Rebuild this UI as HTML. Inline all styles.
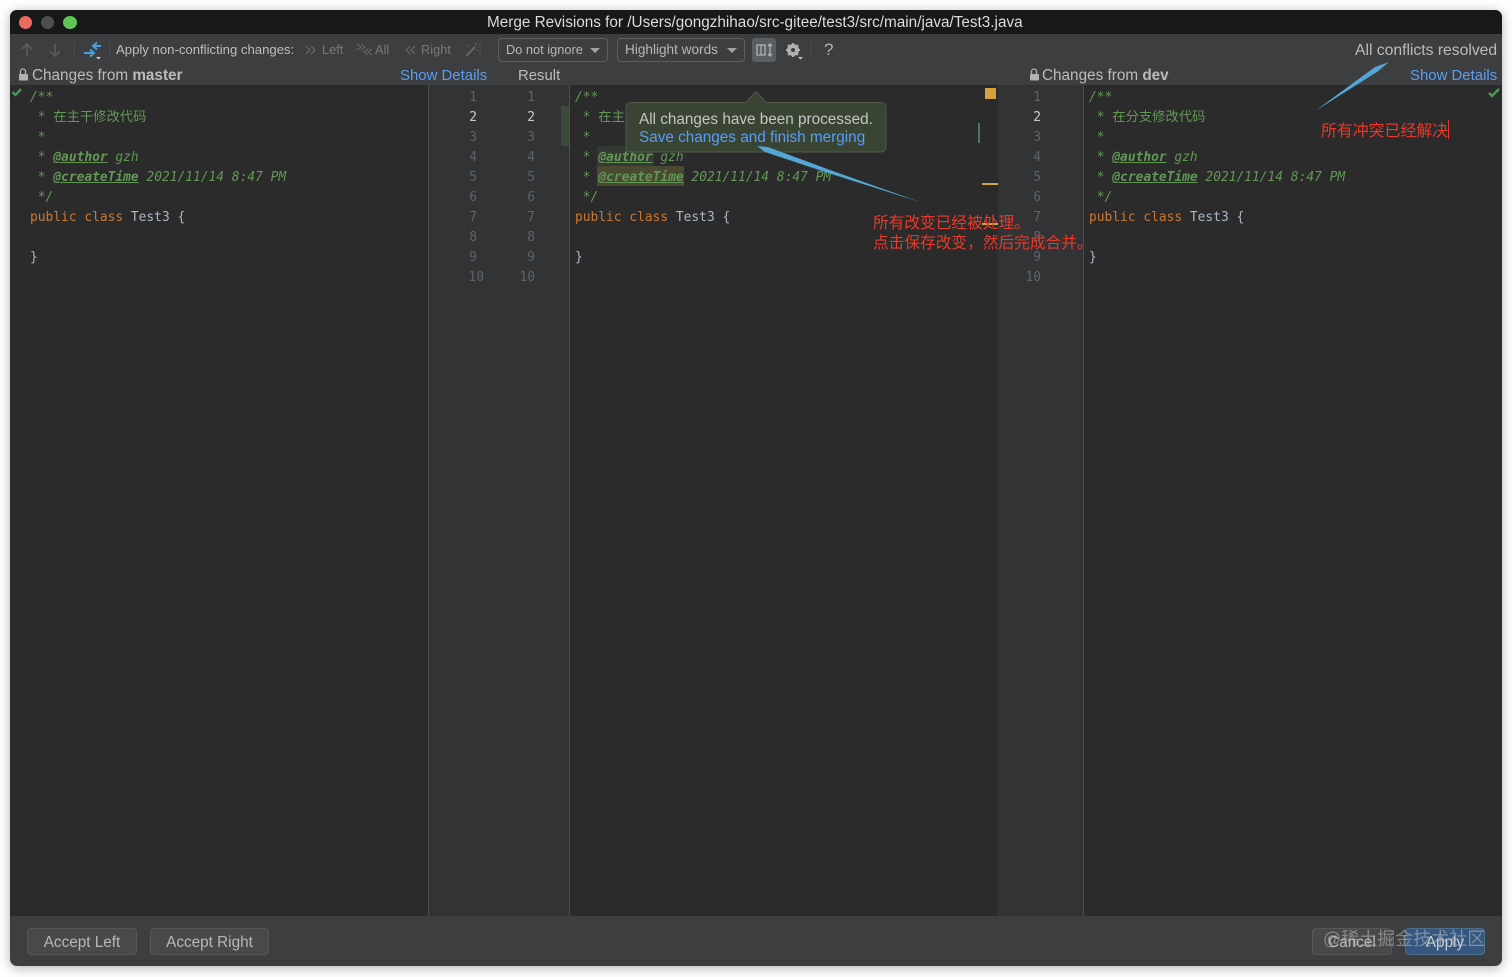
<!DOCTYPE html>
<html><head><meta charset="utf-8">
<style>
html,body{margin:0;padding:0;background:#fff;width:1512px;height:977px;overflow:hidden}
*{box-sizing:border-box}
#w{position:absolute;left:10px;top:10px;width:1492px;height:956px;border-radius:7px;overflow:hidden;background:#3d3e40;box-shadow:0 2px 12px rgba(0,0,0,.3)}
.a{position:absolute;white-space:pre;line-height:20px}
.s{font-family:"Liberation Sans","Noto Sans CJK SC",sans-serif;font-size:13.5px;color:#bbbbbb}
.t{font-size:13.15px;color:#bcbebf}
.d{color:#77797a;font-size:12.8px}
.b{color:#589df6;font-size:14.95px;margin-top:3px}
.h{font-size:15.3px;color:#bbb;margin-top:3px}
.m{font-family:"DejaVu Sans Mono","Noto Sans CJK SC",monospace;font-size:12.9px;color:#a9b7c6;margin-top:3px}
.c{color:#629755;font-style:italic}
.c u{font-weight:bold;text-decoration-thickness:1px}
.z{font-family:"Noto Sans CJK SC",sans-serif;font-style:normal;font-size:13.3px;line-height:0}
.k{color:#cc7832}
.n{font-family:"DejaVu Sans Mono",monospace;font-size:12.9px;color:#606366;text-align:right;width:24px;margin-top:3px}
.n.o{color:#c9cacb}
.r{font-family:"Noto Sans CJK SC",sans-serif;color:#e8392a;font-size:15.7px}
.btn{position:absolute;top:928px;height:27px;border:1px solid #555759;border-radius:4px;background:#47494b;color:#b6b8b9;font:15.3px/27px "Liberation Sans",sans-serif;text-align:center}
.dd{position:absolute;top:38px;height:24px;border:1px solid #5c5e60;border-radius:4px;background:#3d3e40;color:#b5b7b8;font:12.8px/22px "Liberation Sans",sans-serif;padding-left:7px}
.dd i{position:absolute;right:7px;top:9px;border-left:5px solid transparent;border-right:5px solid transparent;border-top:5px solid #a0a2a3}
</style></head><body>
<div id="w"></div>
<div style="position:absolute;left:10px;top:10px;width:1492px;height:956px;border-radius:7px;overflow:hidden">
<div style="position:absolute;left:0;top:0;width:1492px;height:24px;background:#17181a"></div>
</div>

<!-- traffic lights -->
<div style="position:absolute;left:19px;top:16px;width:13px;height:13px;border-radius:50%;background:#ec6a5e"></div>
<div style="position:absolute;left:41px;top:16px;width:13px;height:13px;border-radius:50%;background:#4e4e4e"></div>
<div style="position:absolute;left:63px;top:16px;width:14px;height:13px;border-radius:50%;background:#61c554"></div>
<div class="a" style="left:487px;top:13px;font:15.3px/20px 'Liberation Sans',sans-serif;color:#dcdcdc">Merge Revisions for /Users/gongzhihao/src-gitee/test3/src/main/java/Test3.java</div>

<!-- editor backgrounds -->
<div style="position:absolute;left:10px;top:85px;width:1492px;height:831px;background:#2b2b2b"></div>
<div style="position:absolute;left:428px;top:85px;width:142px;height:831px;background:#313335;border-left:1px solid #4b4d4f;border-right:1px solid #4b4d4f"></div>
<div style="position:absolute;left:998px;top:85px;width:86px;height:831px;background:#313335;border-right:1px solid #4b4d4f"></div>
<div style="position:absolute;left:561px;top:106px;width:8px;height:40px;background:#3c4a3c"></div>

<!-- toolbar icons -->
<svg style="position:absolute;left:0;top:0" width="1512" height="110" fill="none">
<path d="M27 56V44M22 49l5-5 5 5" stroke="#5a5c5e" stroke-width="1.6"/>
<path d="M55 44v12M50 51l5 5 5-5" stroke="#5a5c5e" stroke-width="1.6"/>
<path d="M74 42v16M110 42v16M480 42v16M811 42v16" stroke="#4c4e50" stroke-width="1"/>
<path d="M101 46h-7M97 42.500l-4 3.500 4 3.500" stroke="#4a9fd8" stroke-width="2"/>
<path d="M84 53h8M90 49.500l4 3.500-4 3.500" stroke="#4a9fd8" stroke-width="2"/>
<path d="M96 57h5l-2.500 2.500z" fill="#c8c8c8"/>
<path d="M306 46l4 4-4 4M311 46l4 4-4 4" stroke="#616365" stroke-width="1.300"/>
<path d="M357 44l4 3-4 3M361 44l4 3-4 3M372 49l-4 3 4 3M368 49l-4 3 4 3" stroke="#616365" stroke-width="1.100"/>
<path d="M410 46l-4 4 4 4M415 46l-4 4 4 4" stroke="#616365" stroke-width="1.300"/>
<path d="M466 56l9-9" stroke="#656769" stroke-width="2"/><path d="M476 43v3M468 45v2M478 50h-2" stroke="#656769"/>
<rect x="752" y="38" width="24" height="24" rx="3" fill="#5b5e60"/>
<path d="M757 45h8v10h-8zM761 45v10" stroke="#b0b2b3" stroke-width="1.300"/>
<path d="M770 44v12M768 46l2-2 2 2M768 54l2 2 2-2" stroke="#b0b2b3" stroke-width="1.300"/>
<circle cx="793" cy="50" r="4.500" stroke="#afb1b2" stroke-width="3"/>
<path d="M793 43v14M786 50h14M788 45l10 10M798 45l-10 10" stroke="#afb1b2" stroke-width="2"/>
<circle cx="793" cy="50" r="2" fill="#3d3e40"/>
<path d="M798 57h5l-2.500 2.500z" fill="#c8c8c8"/>
<!-- locks -->
<path d="M20.500 74v-2.500a2.500 2.500 0 0 1 5 0V74" stroke="#b0b2b3" stroke-width="1.300"/><rect x="19" y="74" width="9" height="6.500" rx="1" fill="#b0b2b3"/>
<path d="M1031.500 74v-2.500a2.500 2.500 0 0 1 5 0V74" stroke="#b0b2b3" stroke-width="1.300"/><rect x="1030" y="74" width="9" height="6.500" rx="1" fill="#b0b2b3"/>
<!-- checks -->
<path d="M12.500 92l3 3 5.500-6" stroke="#4f9a55" stroke-width="2.300"/>
<path d="M1489 93l3 3 7-7" stroke="#4f9a55" stroke-width="2.300"/>
</svg>

<div class="a s t" style="left:116px;top:40px">Apply non-conflicting changes:</div>
<div class="a s d" style="left:322px;top:40px">Left</div>
<div class="a s d" style="left:375px;top:40px">All</div>
<div class="a s d" style="left:421px;top:40px">Right</div>
<div class="dd" style="left:498px;width:110px">Do not ignore<i></i></div>
<div class="dd" style="left:617px;width:128px;font-size:13.6px">Highlight words<i></i></div>
<div class="a s" style="left:824px;top:40px;font-size:17px;color:#b0b2b3">?</div>
<div class="a s" style="left:1355px;top:41px;font-size:15.7px;color:#bbb">All conflicts resolved</div>

<div class="a s h" style="left:32px;top:63px">Changes from <b>master</b></div>
<div class="a s b" style="left:400px;top:63px">Show Details</div>
<div class="a s h" style="left:518px;top:63px;font-size:14.900px">Result</div>
<div class="a s h" style="left:1042px;top:63px">Changes from <b>dev</b></div>
<div class="a s b" style="left:1410px;top:63px">Show Details</div>

<!-- left code -->
<div class="a m c" style="left:30px;top:85px">/**</div>
<div class="a m c" style="left:30px;top:105px"> * <span class="z">在主干修改代码</span></div>
<div class="a m c" style="left:30px;top:125px"> *</div>
<div class="a m c" style="left:30px;top:145px"> * <u>@author</u> gzh</div>
<div class="a m c" style="left:30px;top:165px"> * <u>@createTime</u> 2021/11/14 8:47 PM</div>
<div class="a m c" style="left:30px;top:185px"> */</div>
<div class="a m" style="left:30px;top:205px"><span class="k">public class</span> Test3 {</div>
<div class="a m" style="left:30px;top:245px">}</div>

<!-- line numbers -->
<div class="a n" style="left:453px;top:85px">1</div><div class="a n o" style="left:453px;top:105px">2</div><div class="a n" style="left:453px;top:125px">3</div><div class="a n" style="left:453px;top:145px">4</div><div class="a n" style="left:453px;top:165px">5</div><div class="a n" style="left:453px;top:185px">6</div><div class="a n" style="left:453px;top:205px">7</div><div class="a n" style="left:453px;top:225px">8</div><div class="a n" style="left:453px;top:245px">9</div><div class="a n" style="left:460px;top:265px">10</div>
<div class="a n" style="left:511px;top:85px">1</div><div class="a n o" style="left:511px;top:105px">2</div><div class="a n" style="left:511px;top:125px">3</div><div class="a n" style="left:511px;top:145px">4</div><div class="a n" style="left:511px;top:165px">5</div><div class="a n" style="left:511px;top:185px">6</div><div class="a n" style="left:511px;top:205px">7</div><div class="a n" style="left:511px;top:225px">8</div><div class="a n" style="left:511px;top:245px">9</div><div class="a n" style="left:511px;top:265px">10</div>
<div class="a n" style="left:1017px;top:85px">1</div><div class="a n o" style="left:1017px;top:105px">2</div><div class="a n" style="left:1017px;top:125px">3</div><div class="a n" style="left:1017px;top:145px">4</div><div class="a n" style="left:1017px;top:165px">5</div><div class="a n" style="left:1017px;top:185px">6</div><div class="a n" style="left:1017px;top:205px">7</div><div class="a n" style="left:1017px;top:225px">8</div><div class="a n" style="left:1017px;top:245px">9</div><div class="a n" style="left:1017px;top:265px">10</div>

<!-- middle code -->
<div style="position:absolute;left:597px;top:166px;width:87px;height:20px;background:#4a4a33"></div>
<div style="position:absolute;left:597px;top:146px;width:57px;height:20px;background:#333a33"></div>
<div class="a m c" style="left:575px;top:85px">/**</div>
<div class="a m c" style="left:575px;top:105px"> * <span class="z">在主</span></div>
<div class="a m c" style="left:575px;top:125px"> *</div>
<div class="a m c" style="left:575px;top:145px"> * <u>@author</u> gzh</div>
<div class="a m c" style="left:575px;top:165px"> * <u>@createTime</u> 2021/11/14 8:47 PM</div>
<div class="a m c" style="left:575px;top:185px"> */</div>
<div class="a m" style="left:575px;top:205px"><span class="k">public class</span> Test3 {</div>
<div class="a m" style="left:575px;top:245px">}</div>

<!-- right code -->
<div class="a m c" style="left:1089px;top:85px">/**</div>
<div class="a m c" style="left:1089px;top:105px"> * <span class="z">在分支修改代码</span></div>
<div class="a m c" style="left:1089px;top:125px"> *</div>
<div class="a m c" style="left:1089px;top:145px"> * <u>@author</u> gzh</div>
<div class="a m c" style="left:1089px;top:165px"> * <u>@createTime</u> 2021/11/14 8:47 PM</div>
<div class="a m c" style="left:1089px;top:185px"> */</div>
<div class="a m" style="left:1089px;top:205px"><span class="k">public class</span> Test3 {</div>
<div class="a m" style="left:1089px;top:245px">}</div>

<!-- stripe marks -->
<div style="position:absolute;left:985px;top:88px;width:11px;height:11px;background:#d6a33a"></div>
<div style="position:absolute;left:978px;top:123px;width:2px;height:20px;background:#4b7a5a"></div>
<div style="position:absolute;left:982px;top:183px;width:16px;height:2px;background:#d0a83c"></div>
<div style="position:absolute;left:982px;top:223px;width:16px;height:2px;background:#c9a83c"></div>

<!-- tooltip -->
<svg style="position:absolute;left:620px;top:88px" width="275" height="70" fill="none">
<path d="M11 14.500H126L136 3.500 146 14.500H261a5 5 0 0 1 5 5V59a5 5 0 0 1-5 5H11a5 5 0 0 1-5-5V19.500a5 5 0 0 1 5-5z" fill="#3a4433" stroke="#50594a"/>
</svg>
<div class="a s" style="left:639px;top:110px;font-size:15.3px;color:#c4c6c4">All changes have been processed.</div>
<div class="a s" style="left:639px;top:128px;font-size:15.3px;color:#589df6">Save changes and finish merging</div>

<!-- annotations -->
<svg style="position:absolute;left:0;top:0" width="1512" height="300" fill="none">
<path d="M757 146L768 147 830 170 920 202 825 172 765 152z" fill="#54a6d4"/>
<path d="M1389 62L1377 72 1315 111 1375 67z" fill="#54a6d4"/>
</svg>
<div class="a r" style="left:873px;top:212px">所有改变已经被处理。</div>
<div class="a r" style="left:873px;top:232px">点击保存改变，然后完成合并。</div>
<div class="a r" style="left:1321px;top:120px;font-size:15.9px">所有冲突已经解决</div>
<div style="position:absolute;left:1448px;top:120px;width:1px;height:19px;background:#e8392a"></div>

<!-- bottom -->
<div class="btn" style="left:27px;width:110px">Accept Left</div>
<div class="btn" style="left:150px;width:119px">Accept Right</div>
<div class="btn" style="left:1312px;width:80px">Cancel</div>
<div class="btn" style="left:1405px;width:80px;background:#365880;border-color:#4c708c;color:#c8cdd2">Apply</div>
<div class="a" style="left:1323px;top:929px;font:18px/20px 'Liberation Sans','Noto Sans CJK SC',sans-serif;color:rgba(190,190,190,.55)">@稀土掘金技术社区</div>
</body></html>
